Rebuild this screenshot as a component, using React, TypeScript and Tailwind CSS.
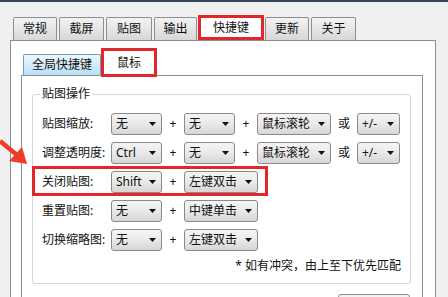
const font = "font-['Noto_Sans','Noto_Sans_CJK_SC',sans-serif]";

const outerTabs = [
  { label: "常规", w: "w-[44px]" },
  { label: "截屏", w: "w-[45px]" },
  { label: "贴图", w: "w-[46px]" },
  { label: "输出", w: "w-[43px]" },
  { label: "快捷键", w: "w-[66px]", active: true },
  { label: "更新", w: "w-[44px]" },
  { label: "关于", w: "w-[45px]" },
];

const Combo = ({ value, w }: { value: string; w: string }) => (
  <div
    className={`${w} h-[22px] flex items-center justify-between pl-[4px] pr-[5px] rounded-[3px] border border-[#8a8a8a] bg-linear-to-b from-[#f5f5f5] via-[#e9e9e9] to-[#d6d6d6] text-[12px] text-[#111]`}
  >
    <span className="leading-none whitespace-nowrap">{value}</span>
    <svg width="7" height="4" viewBox="0 0 7 4" className="shrink-0">
      <path d="M0 0h7L3.5 4z" fill="#111" />
    </svg>
  </div>
);

const Sep = ({ text, w }: { text: string; w: string }) => (
  <span className={`${w} text-center text-[12px] text-[#111]`}>{text}</span>
);

interface RowProps {
  label: string;
  a: string;
  b: string;
  c?: string;
  d?: string;
  mark?: boolean;
}

const Row = ({ label, a, b, c, d, mark }: RowProps) => (
  <div className="relative flex items-center h-[22px]">
    <span className="w-[69px] text-[12px] text-[#111] whitespace-nowrap">{label}</span>
    <Combo value={a} w="w-[51px]" />
    <Sep text="+" w="w-[22px]" />
    <Combo value={b} w={c ? "w-[51px]" : "w-[74px]"} />
    {c && (
      <>
        <Sep text="+" w="w-[22px]" />
        <Combo value={c} w="w-[74px]" />
        <Sep text="或" w="w-[26px]" />
        <Combo value={d ?? ""} w="w-[43px]" />
      </>
    )}
    {mark && (
      <div className="absolute -left-[10px] -top-[5px] w-[236px] h-[30px] border-[3px] border-[#e3262c] pointer-events-none" />
    )}
  </div>
);

export default function App() {
  return (
    <div className={`relative w-[448px] h-[297px] overflow-hidden bg-[#f0f0f0] ${font}`}>
      <div className="h-[2px] bg-[#34435a]" />

      {/* outer tab strip */}
      <div className="pt-[11px] pl-[13px] flex items-end gap-[2px] h-[38px]">
        {outerTabs.map((t) =>
          t.active ? (
            <div
              key={t.label}
              className={`${t.w} h-[25px] -mx-[1px] flex items-center justify-center bg-white border-[3px] border-[#e3262c] text-[12px] text-[#111]`}
            >
              {t.label}
            </div>
          ) : (
            <div
              key={t.label}
              className={`${t.w} h-[23px] flex items-center justify-center rounded-t-[2px] border border-b-0 border-[#8c8e94] bg-linear-to-b from-[#f3f3f3] to-[#d7d7d7] text-[12px] text-[#111]`}
            >
              {t.label}
            </div>
          )
        )}
      </div>

      {/* outer panel */}
      <div className="ml-[10px] w-[426px] h-[270px] border border-[#8c8e94] bg-white">
        {/* inner tab strip */}
        <div className="pt-[7px] pl-[12px] flex items-end h-[34px]">
          <div className="w-[78px] h-[21px] flex items-center justify-center rounded-t-[2px] border border-b-0 border-[#6a9ec4] bg-linear-to-b from-[#eef7fd] to-[#b9dff5] text-[12px] text-[#111]">
            全局快捷键
          </div>
          <div className="relative z-10 w-[56px] h-[29px] -mb-[2px] flex items-center justify-center bg-white border-[3px] border-[#e3262c] text-[12px] text-[#111]">
            鼠标
          </div>
        </div>

        {/* inner panel */}
        <div className="ml-[10px] w-[402px] h-[240px] border border-[#8c8e94] bg-white pt-[18px] pl-[10px]">
          <div className="relative w-[379px] h-[190px] rounded-[3px] border border-[#d6d6d6]">
            <span className="absolute -top-[9px] left-[7px] bg-white px-[2px] text-[12px] leading-[16px] text-[#111]">
              贴图操作
            </span>
            <div className="pt-[18px] pl-[9px] flex flex-col gap-[7px]">
              <Row label="贴图缩放:" a="无" b="无" c="鼠标滚轮" d="+/-" />
              <Row label="调整透明度:" a="Ctrl" b="无" c="鼠标滚轮" d="+/-" />
              <Row label="关闭贴图:" a="Shift" b="左键双击" mark />
              <Row label="重置贴图:" a="无" b="中键单击" />
              <Row label="切换缩略图:" a="无" b="左键双击" />
            </div>
            <div className="mt-[7px] pr-[9px] text-right text-[12px] leading-[16px] text-[#111]">
              * 如有冲突，由上至下优先匹配
            </div>
          </div>
          <div className="mt-[10px] ml-[306px] w-[72px] h-[23px] rounded-[3px] border border-[#8a8a8a] bg-linear-to-b from-[#f5f5f5] to-[#dcdcdc]" />
        </div>
      </div>

      {/* annotation arrow */}
      <svg className="absolute left-0 top-[136px]" width="30" height="32" viewBox="0 0 30 32">
        <path d="M0 5 L17 19" stroke="#ee3b2c" strokeWidth="4.5" />
        <path d="M27 28 L9 25 L22 11 Z" fill="#ee3b2c" />
      </svg>
    </div>
  );
}
